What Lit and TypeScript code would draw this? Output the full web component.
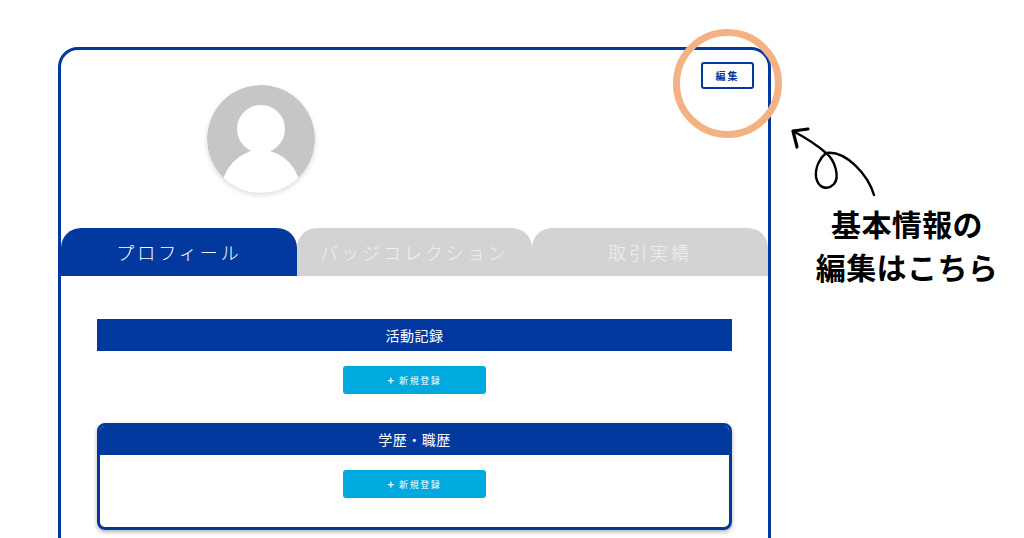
import { LitElement, html, css } from "lit";
import { customElement } from "lit/decorators.js";

const TABS = ["プロフィール", "バッジコレクション", "取引実績"];

@customElement("app-root")
export class AppRoot extends LitElement {
  static styles = css`
    :host {
      display: block;
      position: relative;
      width: 1024px;
      height: 538px;
      overflow: hidden;
      background: #fff;
      font-family: "Noto Sans CJK JP", "Noto Sans", sans-serif;
      --blue: #03399f;
    }
    .card {
      box-sizing: border-box;
      width: 713px;
      height: 600px;
      margin: 47px 0 0 58px;
      border: 3px solid var(--blue);
      border-radius: 20px;
    }
    .head {
      display: flex;
      justify-content: space-between;
      align-items: flex-start;
      height: 178px;
      padding: 12px 14px 0 146px;
      box-sizing: border-box;
    }
    .avatar {
      display: block;
      width: 108px;
      height: 108px;
      margin-top: 23px;
      border-radius: 50%;
      box-shadow: 0 2px 5px rgba(0, 0, 0, 0.14);
    }
    .edit {
      box-sizing: border-box;
      width: 53px;
      height: 27px;
      display: flex;
      align-items: center;
      justify-content: center;
      border: 2px solid var(--blue);
      border-radius: 3px;
      background: #fff;
      color: var(--blue);
      font-size: 10px;
      font-weight: 700;
      letter-spacing: 2px;
    }
    .tabs {
      display: grid;
      grid-template-columns: 236px 235px 236px;
      height: 48px;
    }
    .tab {
      display: flex;
      align-items: center;
      justify-content: center;
      border-radius: 20px 20px 0 0;
      background: #d3d3d3;
      color: #f1f1f1;
      font-size: 18px;
      font-weight: 300;
      letter-spacing: 3px;
    }
    .tab.on {
      background: var(--blue);
      color: #fff;
    }
    .content {
      padding: 43px 36px 0;
    }
    .title {
      height: 32px;
      display: flex;
      align-items: center;
      justify-content: center;
      background: var(--blue);
      color: #fff;
      font-size: 14px;
      letter-spacing: 0.5px;
    }
    .add-row {
      display: flex;
      justify-content: center;
      padding-top: 15px;
    }
    .add {
      width: 143px;
      height: 28px;
      display: flex;
      align-items: center;
      justify-content: center;
      gap: 5px;
      border-radius: 3px;
      background: #00a9de;
      color: #fff;
      font-size: 9px;
      letter-spacing: 1.6px;
    }
    .plus {
      font-size: 11px;
      font-weight: 700;
      letter-spacing: 0;
    }
    .boxed {
      margin-top: 29px;
      border-radius: 8px;
      overflow: hidden;
      border: 3px solid var(--blue);
      box-shadow: 0 2px 4px rgba(0, 0, 0, 0.3);
    }
    .boxed .title {
      margin: -3px -3px 0;
      height: 32px;
    }
    .boxed .add-row {
      padding-bottom: 29px;
    }
    .ring {
      position: absolute;
      left: 673px;
      top: 29px;
      width: 109px;
      height: 109px;
    }
    .arrow {
      position: absolute;
      left: 780px;
      top: 120px;
      width: 110px;
      height: 85px;
    }
    .note {
      position: absolute;
      left: 790px;
      top: 202px;
      width: 234px;
      text-align: center;
      color: #000;
      font-size: 30px;
      font-weight: 700;
      line-height: 43px;
      letter-spacing: 0.4px;
    }
  `;

  private addButton() {
    return html`<div class="add-row">
      <div class="add"><span class="plus">+</span><span>新規登録</span></div>
    </div>`;
  }

  render() {
    return html`
      <div class="card">
        <div class="head">
          <svg class="avatar" viewBox="0 0 108 108">
            <defs>
              <clipPath id="disc"><circle cx="54" cy="54" r="54" /></clipPath>
            </defs>
            <circle cx="54" cy="54" r="54" fill="#c6c6c6" />
            <g clip-path="url(#disc)" fill="#fff">
              <circle cx="54" cy="44" r="24" />
              <ellipse cx="54" cy="108" rx="40" ry="43" />
            </g>
          </svg>
          <div class="edit">編集</div>
        </div>
        <div class="tabs">
          ${TABS.map(
            (t, i) => html`<div class="tab ${i === 0 ? "on" : ""}">${t}</div>`
          )}
        </div>
        <div class="content">
          <section>
            <div class="title">活動記録</div>
            ${this.addButton()}
          </section>
          <section class="boxed">
            <div class="title">学歴・職歴</div>
            ${this.addButton()}
          </section>
        </div>
      </div>

      <svg class="ring" viewBox="0 0 109 109">
        <circle cx="54.5" cy="54.5" r="51" fill="none" stroke="#f3b283" stroke-width="7" />
      </svg>
      <svg class="arrow" viewBox="780 120 110 85" fill="none" stroke="#000" stroke-linecap="round" stroke-linejoin="round">
        <path
          stroke-width="2.4"
          d="M874 195C868 175 846 150 826 153C835 160 840 177 834 184C827 191 818 188 816 177C815 167 820 158 826 153C816 144 806 138 793 131"
        />
        <path stroke-width="3.2" d="M808 129L793 131L797 147" />
      </svg>
      <div class="note">基本情報の<br />編集はこちら</div>
    `;
  }
}
